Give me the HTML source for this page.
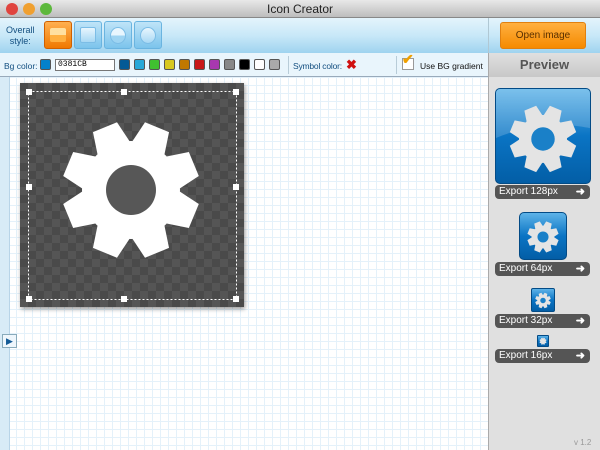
<!DOCTYPE html><html><head><style>
*{margin:0;padding:0;box-sizing:border-box}
body{width:600px;height:450px;overflow:hidden;font-family:"Liberation Sans",sans-serif;position:relative;background:#fff}
.abs{position:absolute}
#title{left:0;top:0;width:600px;height:18px;background:linear-gradient(#e8e8e8,#bdbdbd);border-bottom:1px solid #888;text-align:center;font-size:12px;line-height:18px;color:#222}
.dot{top:3px;width:12px;height:12px;border-radius:50%}
#tb{left:0;top:18px;width:488px;height:35px;background:linear-gradient(#e4f4fc,#c8e8f8 50%,#9fd3ef)}
#tbr{left:488px;top:18px;width:112px;height:35px;background:linear-gradient(#e4f4fc,#c8e8f8 50%,#9fd3ef);border-left:1px solid #b0c8d4}
.sty{top:21px;width:28px;height:28px;border-radius:3px;border:1px solid #6ab4e0;background:linear-gradient(#bfe4f8,#7cc4ec)}
#bar2{left:0;top:53px;width:488px;height:24px;background:#e9f5fc;border-bottom:1px solid #9ab;font-size:8.5px;color:#134f80}
.sw{top:59px;width:11px;height:11px;border:1px solid #555;border-radius:2px}
#prev{left:488px;top:53px;width:112px;height:24px;background:linear-gradient(#e0e0e0,#c8c8c8);font-weight:bold;font-size:13px;color:#555;text-align:center;line-height:24px;border-left:1px solid #aaa}
#grid{left:0;top:77px;width:488px;height:373px;background-color:#fff;background-image:linear-gradient(#e4f1fa 1px,transparent 1px),linear-gradient(90deg,#e4f1fa 1px,transparent 1px);background-size:8px 8px}
#side{left:488px;top:77px;width:112px;height:373px;background:#e0e0e0;border-left:1px solid #aaa}
.exp{left:495px;width:95px;height:14px;border-radius:4px;background:#555;color:#fff;font-size:10px;line-height:14px;padding-left:4px}
.exp b{position:absolute;right:5px;top:0;font-size:11px}
.ic{border-radius:5px;background:linear-gradient(#5eb3e8,#0a74c4 50%,#035ea6);border:1px solid #034b86;overflow:hidden}
</style></head><body>
<svg width="0" height="0" style="position:absolute"><defs>
<g id="gear"><circle cx="0" cy="0" r="49"/>
<g id="t"><polygon points="-18,-42 18,-42 13,-68 -13,-68" transform="rotate(22.5)"/></g>
<use href="#t" transform="rotate(45)"/><use href="#t" transform="rotate(90)"/><use href="#t" transform="rotate(135)"/><use href="#t" transform="rotate(180)"/><use href="#t" transform="rotate(225)"/><use href="#t" transform="rotate(270)"/><use href="#t" transform="rotate(315)"/>
</g>
<pattern id="chk" width="16" height="16" patternUnits="userSpaceOnUse"><rect width="16" height="16" fill="#555"/><rect width="8" height="8" fill="#4a4a4a"/><rect x="8" y="8" width="8" height="8" fill="#4a4a4a"/></pattern>
</defs></svg>
<div id="title" class="abs">Icon Creator</div>
<div class="abs dot" style="left:6px;background:#e0443e"></div>
<div class="abs dot" style="left:23px;background:#f0a030"></div>
<div class="abs dot" style="left:40px;background:#5cb83c"></div>
<div id="tb" class="abs"></div><div id="tbr" class="abs"></div>
<div class="abs" style="left:6px;top:25px;font-size:9px;color:#134f80;text-align:center;line-height:11px">Overall<br>style:</div>
<div class="abs sty" style="left:44px;background:linear-gradient(#ffb050,#f07800);border-color:#d06000"><div style="margin:6px 5px;height:14px;border-radius:2px;background:linear-gradient(#ffe0a0 50%,#ffb040 50%)"></div></div>
<div class="abs sty" style="left:74px"><div style="margin:5px;height:16px;border-radius:2px;background:linear-gradient(#e8f6fe,#a8d8f4);border:1px solid #7cbde6"></div></div>
<div class="abs sty" style="left:104px"><div style="margin:5px;height:17px;border-radius:50%;background:linear-gradient(#e8f6fe 50%,#9ed4f2 50%);border:1px solid #7cbde6"></div></div>
<div class="abs sty" style="left:134px"><div style="margin:5px;height:17px;border-radius:50%;background:linear-gradient(#e8f6fe,#a8d8f4);border:1px solid #7cbde6"></div></div>
<div class="abs" style="left:500px;top:22px;width:86px;height:27px;border-radius:3px;background:linear-gradient(#ffb040,#f58a00);border:1px solid #e08010;font-size:10px;color:#5a3000;text-align:center;line-height:26px">Open image</div>
<div id="bar2" class="abs"><span class="abs" style="left:4px;top:8px">Bg color:</span><span class="abs" style="left:293px;top:8px;letter-spacing:-0.2px">Symbol color:</span><span class="abs" style="left:420px;top:8px;color:#111">Use BG gradient</span></div>
<div class="abs sw" style="left:40px;background:#0381cb"></div>
<div class="abs" style="left:55px;top:59px;width:60px;height:12px;border:1px solid #777;background:#fff;font-size:8px;font-family:'Liberation Mono',monospace;line-height:10px;padding-left:2px">0381CB</div>
<div class="abs sw" style="left:119px;background:#035a96"></div>
<div class="abs sw" style="left:134px;background:#29a8d8"></div>
<div class="abs sw" style="left:149px;background:#40c030"></div>
<div class="abs sw" style="left:164px;background:#d8c820"></div>
<div class="abs sw" style="left:179px;background:#c07800"></div>
<div class="abs sw" style="left:194px;background:#c81818"></div>
<div class="abs sw" style="left:209px;background:#a838b0"></div>
<div class="abs sw" style="left:224px;background:#888"></div>
<div class="abs sw" style="left:239px;background:#000"></div>
<div class="abs sw" style="left:254px;background:#fff"></div>
<div class="abs sw" style="left:269px;background:#aaa"></div>
<div class="abs" style="left:288px;top:56px;width:1px;height:18px;background:#b8ccd8"></div>
<div class="abs" style="left:396px;top:56px;width:1px;height:18px;background:#b8ccd8"></div>
<div class="abs" style="left:346px;top:58px;font-size:13px;color:#d01010;font-weight:bold;line-height:13px">✖</div>
<div class="abs" style="left:402px;top:58px;width:12px;height:12px;border:1px solid #999;background:#fff"></div>
<div class="abs" style="left:402px;top:51px;font-size:14px;color:#f0a000;font-weight:bold">✔</div>
<div id="prev" class="abs">Preview</div>
<div id="grid" class="abs"></div>
<div class="abs" style="left:0;top:77px;width:10px;height:373px;background:#d8ebf7;border-right:1px solid #b8d4e8"></div>
<div class="abs" style="left:2px;top:334px;width:15px;height:14px;background:#eef6fc;border:1px solid #8ab;color:#135a96;font-size:9px;line-height:12px;text-align:center">▶</div>
<svg class="abs" style="left:20px;top:83px;filter:drop-shadow(1px 2px 2px rgba(0,0,0,.4))" width="224" height="224">
<rect width="224" height="224" fill="url(#chk)"/>
<g transform="translate(111,107)" fill="#fff"><use href="#gear"/><circle r="25" fill="#575757"/></g>
<rect x="8.5" y="8.5" width="208" height="208" fill="none" stroke="#fff" stroke-dasharray="2,2"/>
<g fill="#fff"><rect x="6" y="6" width="6" height="6"/><rect x="101" y="6" width="6" height="6"/><rect x="213" y="6" width="6" height="6"/><rect x="6" y="101" width="6" height="6"/><rect x="213" y="101" width="6" height="6"/><rect x="6" y="213" width="6" height="6"/><rect x="101" y="213" width="6" height="6"/><rect x="213" y="213" width="6" height="6"/></g>
</svg>
<div id="side" class="abs"></div>
<svg class="abs ic" style="left:495px;top:88px" width="96" height="96" viewBox="0 0 96 96"><path d="M0 0H96V40Q48 30 0 50Z" fill="#fff" opacity=".18"/><g transform="translate(48,51) scale(.5)" fill="#e4e4e4"><use href="#gear"/><circle r="24" fill="#1a80c8"/></g></svg>
<div class="abs exp" style="top:185px">Export 128px<b>➜</b></div>
<svg class="abs ic" style="left:519px;top:212px" width="48" height="48" viewBox="0 0 96 96"><g transform="translate(48,50) scale(.48)" fill="#e4e4e4"><use href="#gear"/><circle r="24" fill="#1a80c8"/></g></svg>
<div class="abs exp" style="top:262px">Export 64px<b>➜</b></div>
<svg class="abs ic" style="left:531px;top:288px;border-radius:2px" width="24" height="24" viewBox="0 0 96 96"><g transform="translate(48,50) scale(.5)" fill="#e4e4e4"><use href="#gear"/><circle r="24" fill="#1a80c8"/></g></svg>
<div class="abs exp" style="top:314px">Export 32px<b>➜</b></div>
<svg class="abs ic" style="left:537px;top:335px;border-radius:1px" width="12" height="12" viewBox="0 0 96 96"><g transform="translate(48,50) scale(.5)" fill="#e4e4e4"><use href="#gear"/></g></svg>
<div class="abs exp" style="top:349px">Export 16px<b>➜</b></div>
<div class="abs" style="left:574px;top:438px;font-size:8px;color:#999">v 1.2</div>
</body></html>
